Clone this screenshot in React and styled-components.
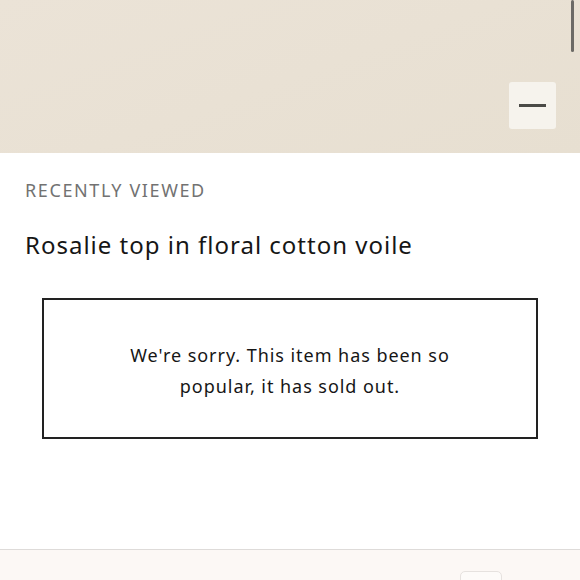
import { createGlobalStyle, styled } from "styled-components";

const GlobalStyle = createGlobalStyle`
  html, body {
    margin: 0;
    padding: 0;
    background: #ffffff;
    font-family: "Noto Sans", Lato, sans-serif;
  }
`;

const Page = styled.div`
  width: 580px;
  height: 580px;
  overflow: hidden;
  display: flex;
  flex-direction: column;
  position: relative;
`;

const Hero = styled.div`
  height: 153px;
  flex-shrink: 0;
  background: linear-gradient(160deg, #ebe3d7 0%, #e7dfd1 100%);
  display: flex;
  align-items: flex-end;
  justify-content: flex-end;
  padding: 0 24px 24px 0;
  box-sizing: border-box;
  position: relative;
`;

const ScrollThumb = styled.div`
  position: absolute;
  top: 0;
  right: 6px;
  width: 3px;
  height: 52px;
  border-radius: 2px;
  background: #6c6a66;
`;

const CollapseButton = styled.button`
  width: 47px;
  height: 47px;
  border: none;
  border-radius: 3px;
  background: #f6f3ed;
  display: flex;
  align-items: center;
  justify-content: center;
  padding: 0;
`;

const Dash = styled.span`
  display: block;
  width: 27px;
  height: 3px;
  background: #4a4a46;
`;

const Content = styled.div`
  flex: 1;
  padding: 25px 25px 0;
  display: flex;
  flex-direction: column;
`;

const Eyebrow = styled.div`
  font-size: 18px;
  letter-spacing: 1.6px;
  color: #727272;
  line-height: 24px;
`;

const Title = styled.h2`
  margin: 28px 0 0;
  font-size: 24px;
  font-weight: 400;
  letter-spacing: 1px;
  color: #161616;
  line-height: 30px;
`;

const SoldOutBox = styled.div`
  margin: 38px 17px 0;
  height: 141px;
  box-sizing: border-box;
  border: 2px solid #222222;
  display: flex;
  align-items: center;
  justify-content: center;
  padding: 5px 60px 0;
`;

const SoldOutText = styled.p`
  margin: 0;
  text-align: center;
  font-size: 18px;
  letter-spacing: 0.95px;
  line-height: 31px;
  color: #161616;
`;

const Footer = styled.div`
  height: 30px;
  flex-shrink: 0;
  border-top: 1px solid #dedbd9;
  background: #fcf8f5;
  position: relative;
`;

const FooterChip = styled.div`
  position: absolute;
  left: 460px;
  top: 21px;
  width: 40px;
  height: 20px;
  border: 1px solid #e6e2df;
  border-radius: 5px;
  background: #fdfbf9;
`;

export default function App() {
  return (
    <Page>
      <GlobalStyle />
      <Hero>
        <ScrollThumb />
        <CollapseButton aria-label="Collapse">
          <Dash />
        </CollapseButton>
      </Hero>
      <Content>
        <Eyebrow>RECENTLY VIEWED</Eyebrow>
        <Title>Rosalie top in floral cotton voile</Title>
        <SoldOutBox>
          <SoldOutText>
            We're sorry. This item has been so popular, it has sold out.
          </SoldOutText>
        </SoldOutBox>
      </Content>
      <Footer>
        <FooterChip />
      </Footer>
    </Page>
  );
}
